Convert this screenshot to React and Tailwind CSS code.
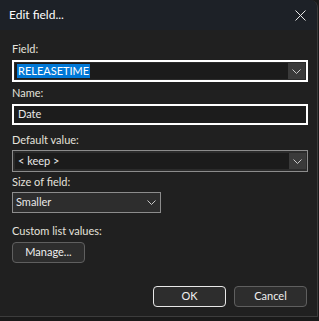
// Boîte de dialogue "Edit field..." — thème sombre façon Windows 11

const font = 'font-["Segoe_UI",Lato,"Noto_Sans",sans-serif]'

function Chevron({ className = '' }) {
  return (
    <svg width="9" height="5" viewBox="0 0 9 5" className={className} fill="none">
      <path d="M0.5 0.5 L4.5 4.5 L8.5 0.5" stroke="#c8c8c8" strokeWidth="1" />
    </svg>
  )
}

function Label({ children, className = '' }) {
  return (
    <div className={`h-4 text-[11px] leading-4 text-[#e4e2dc] ${className}`}>
      {children}
    </div>
  )
}

// combo éditable : zone de texte sombre + bouton flèche à droite
function EditCombo({ focused, children, className = '' }) {
  return (
    <div
      className={`flex h-[22px] bg-[#2b2b2b] ${
        focused ? 'border-2 border-white p-px' : 'border border-[#8c8c8c] p-[2px] pr-px'
      } ${className}`}
    >
      <div className="flex flex-1 items-center bg-[#1b1b1b] pl-[2px] text-[11px] text-[#e8e8e8]">
        {children}
      </div>
      <div className="flex w-[17px] items-center justify-center bg-[#3a3a3a]">
        <Chevron />
      </div>
    </div>
  )
}

function Button({ children, def, className = '' }) {
  return (
    <button
      className={`h-[21px] rounded-[4px] border bg-[#2d2d2d] text-[11px] text-[#f0f0f0] ${
        def ? 'border-[#e8e8e8]' : 'border-[#5f5f5f]'
      } ${className}`}
    >
      {children}
    </button>
  )
}

export default function App() {
  return (
    <div className={`h-[321px] w-[319px] bg-[#1a1a1a] ${font}`}>
      <div className="flex h-[317px] w-[318px] flex-col overflow-hidden rounded-tr-[8px] border-r border-b border-[#3c3c3c] bg-[#202020]">
        {/* Barre de titre */}
        <div className="flex h-[30px] shrink-0 items-center justify-between bg-[#1d2127] pl-[9px] pr-[11px]">
          <span className="text-[12px] text-white">Edit field...</span>
          <svg width="11" height="11" viewBox="0 0 11 11" fill="none">
            <path d="M0.5 0.5 L10.5 10.5 M10.5 0.5 L0.5 10.5" stroke="#e8e8e8" strokeWidth="1" />
          </svg>
        </div>

        {/* Contenu */}
        <div className="flex flex-col px-3">
          <Label className="mt-[11px]">Field:</Label>
          <EditCombo focused className="mt-[3px] w-[296px]">
            <span className="bg-[#0078d7] pl-px pr-px leading-[14px] text-white">RELEASETIME</span>
          </EditCombo>

          <Label className="mt-[3px]">Name:</Label>
          <div className="mt-[3px] flex h-[21px] w-[296px] items-center border-2 border-white bg-[#1c1c1c] pl-[4px] text-[11px] text-[#e8e8e8]">
            Date
          </div>

          <Label className="mt-[7px]">Default value:</Label>
          <EditCombo className="mt-[2px] w-[296px]">
            <span className="pl-px">&lt; keep &gt;</span>
          </EditCombo>

          <Label className="mt-[2px]">Size of field:</Label>
          <div className="mt-[2px] flex h-[21px] w-[149px] items-center justify-between border border-[#8c8c8c] bg-[#2d2d2d] pl-[3px] pr-[4px] text-[11px] text-[#e8e8e8]">
            <span>Smaller</span>
            <Chevron />
          </div>

          <Label className="mt-[10px]">Custom list values:</Label>
          <Button className="mt-[3px] w-[73px]">Manage...</Button>

          <div className="mt-[23px] flex w-[295px] justify-end gap-[8px]">
            <Button def className="w-[73px]">OK</Button>
            <Button className="w-[73px]">Cancel</Button>
          </div>
        </div>
      </div>
    </div>
  )
}
